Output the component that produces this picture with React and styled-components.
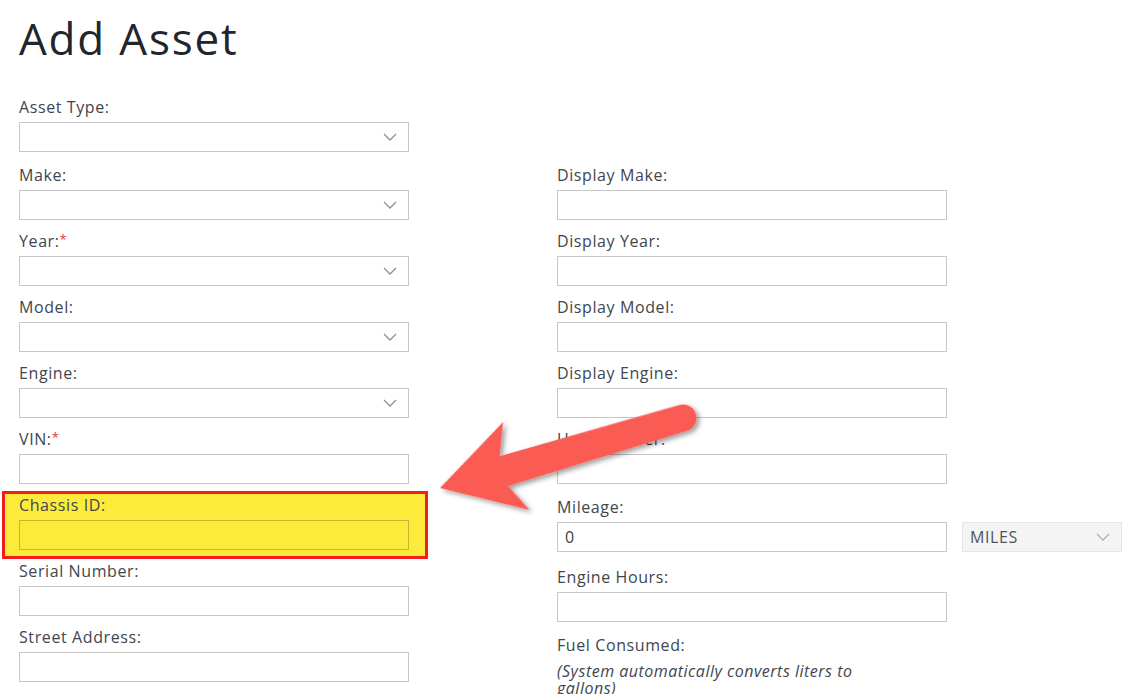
import styled, { createGlobalStyle } from 'styled-components';

const GlobalStyle = createGlobalStyle`
  body {
    margin: 0;
    background: #fff;
    font-family: "Open Sans", "Liberation Sans", sans-serif;
  }
`;

const leftFields = [
  { label: 'Asset Type:', select: true, gap: 13 },
  { label: 'Make:', select: true },
  { label: 'Year:', select: true, required: true },
  { label: 'Model:', select: true },
  { label: 'Engine:', select: true },
  { label: 'VIN:', required: true },
  { label: 'Chassis ID:', highlight: true },
  { label: 'Serial Number:' },
  { label: 'Street Address:' },
];

const rightFields = [
  { label: 'Display Make:' },
  { label: 'Display Year:' },
  { label: 'Display Model:' },
  { label: 'Display Engine:' },
  { label: 'Unit Number:', gap: 13 },
];

function Chevron({ light }) {
  return (
    <svg width="14" height="8" viewBox="0 0 14 8">
      <polyline
        points="1,1 7,7 13,1"
        fill="none"
        stroke={light ? '#b0b0b0' : '#8f8f8f'}
        strokeWidth="1.3"
      />
    </svg>
  );
}

function FormField({ label, select, required, gap, value }) {
  return (
    <Field $gap={gap}>
      <Label>
        {label}
        {required && <Star>*</Star>}
      </Label>
      {select ? (
        <SelectBox>
          <Chevron />
        </SelectBox>
      ) : (
        <InputBox>{value}</InputBox>
      )}
    </Field>
  );
}

function Arrow() {
  return (
    <ArrowLayer width="1144" height="694" viewBox="0 0 1144 694">
      <defs>
        <filter id="arrowShadow" x="-20%" y="-50%" width="140%" height="200%">
          <feDropShadow dx="2" dy="3" stdDeviation="2.5" floodColor="#000" floodOpacity="0.4" />
        </filter>
      </defs>
      <g transform="translate(440,488) rotate(-16.07)" filter="url(#arrowShadow)">
        <path
          d="M0,0 L79,-46 L66,-14 L253,-13.5 A13.5,13.5 0 0 1 253,13.5 L66,17 L80,46 Z"
          fill="#fa5b53"
          strokeLinejoin="round"
        />
      </g>
    </ArrowLayer>
  );
}

export default function App() {
  return (
    <Page>
      <GlobalStyle />
      <Title>Add Asset</Title>
      <Columns>
        <Column>
          {leftFields.map((f) =>
            f.highlight ? (
              <Highlight key={f.label}>
                <FormField {...f} gap={0} />
              </Highlight>
            ) : (
              <FormField key={f.label} {...f} />
            )
          )}
        </Column>
        <RightColumn>
          {rightFields.map((f) => (
            <FormField key={f.label} {...f} />
          ))}
          <Field $gap={15}>
            <Label>Mileage:</Label>
            <InlineRow>
              <InputBox>0</InputBox>
              <UnitSelect>
                MILES
                <Chevron light />
              </UnitSelect>
            </InlineRow>
          </Field>
          <FormField label="Engine Hours:" gap={13} />
          <Label>Fuel Consumed:</Label>
          <Note>(System automatically converts liters to gallons)</Note>
        </RightColumn>
      </Columns>
      <Arrow />
    </Page>
  );
}

const Page = styled.div`
  position: relative;
  width: 1144px;
  height: 694px;
  overflow: hidden;
  padding-left: 19px;
  box-sizing: border-box;
`;

const Title = styled.h1`
  margin: 16px 0 0;
  font-size: 44px;
  line-height: 44px;
  font-weight: 400;
  letter-spacing: 1.8px;
  color: #22252c;
`;

const Columns = styled.div`
  display: flex;
  align-items: flex-start;
  margin-top: 37px;
`;

const Column = styled.div`
  display: flex;
  flex-direction: column;
  width: 390px;
`;

const RightColumn = styled(Column)`
  width: auto;
  margin-left: 148px;
  padding-top: 68px;
`;

const Field = styled.div`
  display: flex;
  flex-direction: column;
  width: 390px;
  margin-bottom: ${(p) => (p.$gap ?? 11)}px;
`;

const Label = styled.div`
  font-size: 16px;
  line-height: 20px;
  letter-spacing: 0.6px;
  color: #41464e;
  margin-bottom: 5px;
  white-space: nowrap;
`;

const Star = styled.span`
  color: #e8323a;
  font-size: 13px;
  vertical-align: top;
  line-height: 16px;
`;

const InputBox = styled.div`
  box-sizing: border-box;
  width: 390px;
  height: 30px;
  border: 1px solid rgba(0, 0, 0, 0.22);
  background: transparent;
  display: flex;
  align-items: center;
  padding: 0 7px;
  font-size: 16px;
  letter-spacing: 0.6px;
  color: #3a3f46;
  flex-shrink: 0;
`;

const SelectBox = styled(InputBox)`
  justify-content: flex-end;
  padding: 0 11px;
`;

const InlineRow = styled.div`
  display: flex;
  gap: 15px;
`;

const UnitSelect = styled.div`
  box-sizing: border-box;
  width: 160px;
  height: 30px;
  display: flex;
  align-items: center;
  justify-content: space-between;
  padding: 0 11px 0 7px;
  background: #f4f4f4;
  border: 1px solid #e6e6e6;
  font-size: 16px;
  letter-spacing: 0.6px;
  color: #50555c;
  flex-shrink: 0;
`;

const Highlight = styled.div`
  margin: -4px -19px 2px -17px;
  padding: 1px 16px 6px 14px;
  border: 3px solid #f51c1c;
  background: #fdeb3c;
`;

const Note = styled.div`
  margin-top: 3px;
  width: 345px;
  font-size: 16px;
  font-style: italic;
  line-height: 17px;
  letter-spacing: 0.5px;
  color: #41464e;
`;

const ArrowLayer = styled.svg`
  position: absolute;
  top: 0;
  left: 0;
  pointer-events: none;
`;
